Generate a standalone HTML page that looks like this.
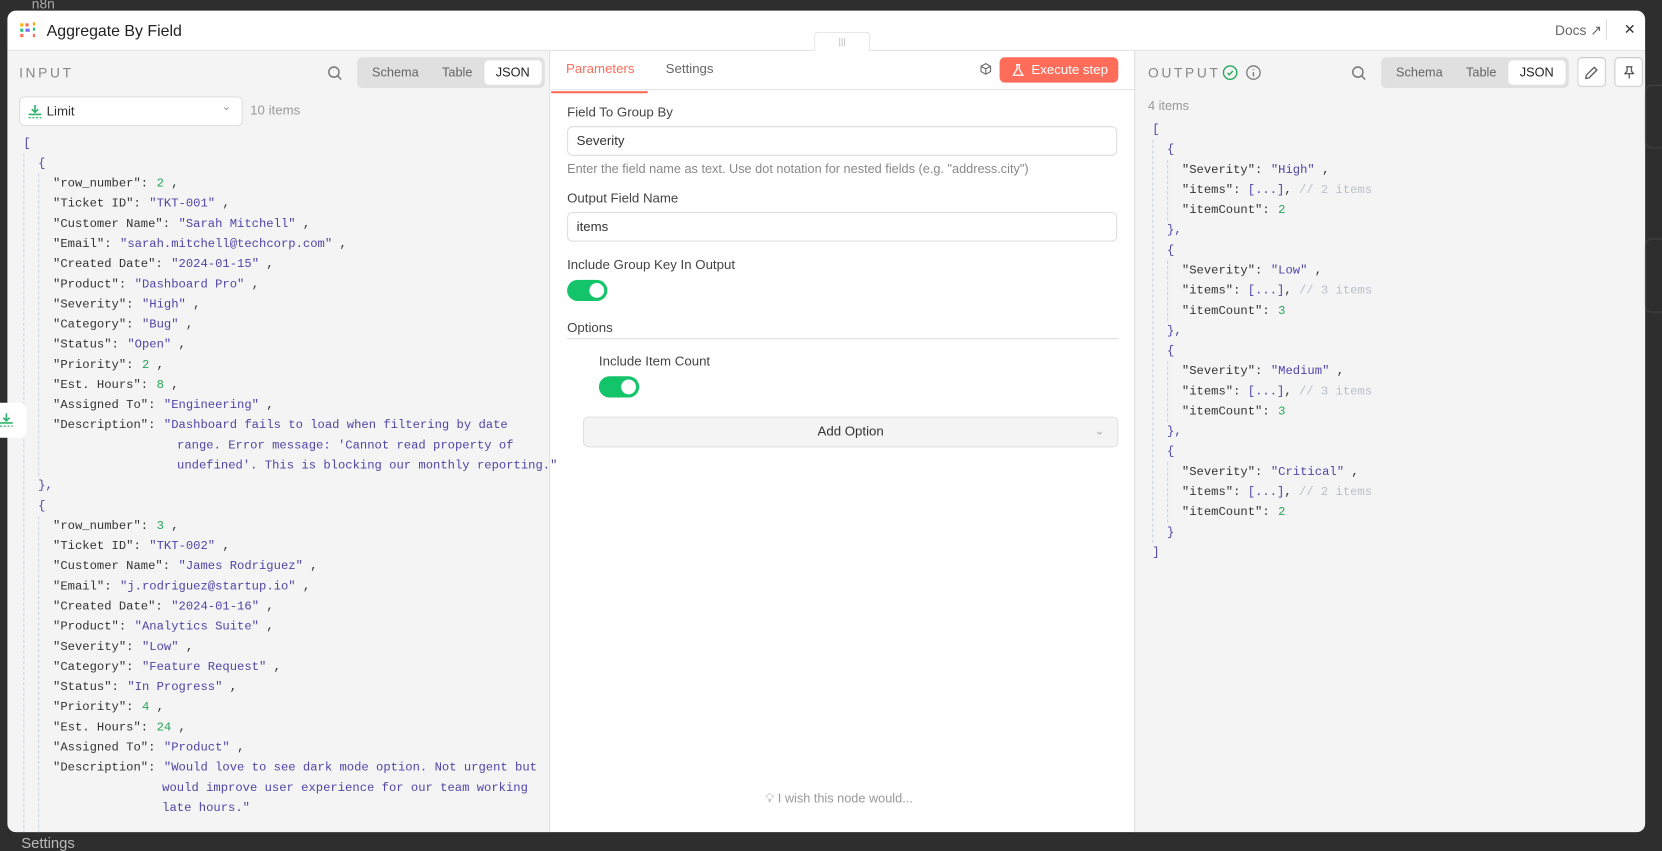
<!DOCTYPE html>
<html><head><meta charset="utf-8"><style>
*{box-sizing:border-box;margin:0;padding:0}
html,body{width:1662px;height:837px;overflow:hidden;background:#2e2e2e}
#w{position:absolute;left:0;top:0;width:1568px;height:790px;transform:scale(1.06);transform-origin:0 0;font-family:"Liberation Sans",sans-serif;color:#333}
.abs{position:absolute}
.modal{position:absolute;left:7px;top:10px;width:1545px;height:775px;background:#fff;border-radius:8px;overflow:hidden}
.mono{font-family:"Liberation Mono",monospace;font-size:11.5px;color:#333}
.ln{height:19px;line-height:19px;white-space:pre}
.ch{border-left:1px dashed #c9d3e2;padding-left:13px}
.s{color:#4f45a6}.n{color:#27a55a}.c{color:#b8c0cc}.p{color:#4f45a6}
.v{margin-left:8px}
.tabs{position:absolute;background:#e0e0e0;border-radius:5px;display:flex;padding:3px;font-size:12px;color:#666}
.tabs div{padding:0 11px;line-height:23px}
.tabs .on{background:#fff;color:#222;border-radius:4px}
.lbl{font-size:12.5px;color:#444}
.inp{position:absolute;left:535px;width:519px;height:28px;border:1px solid #ddd;border-radius:5px;font-size:12.5px;padding-left:8px;line-height:26px;color:#333}
.tog{position:absolute;width:38px;height:20px;background:#13c46a;border-radius:10px}
.tog:after{content:"";position:absolute;right:3px;top:3px;width:14px;height:14px;border-radius:50%;background:#fff}
</style></head><body><div id="w">
<div class="abs" style="left:30px;top:-4px;color:#aaa;font-size:13px">n8n</div>
<div class="abs" style="left:1552px;top:80px;width:110px;height:60px;border:1px solid #444;border-radius:6px"></div>
<div class="abs" style="left:1552px;top:225px;width:110px;height:70px;border:1px solid #444;border-radius:6px"></div>
<div class="abs" style="left:20px;top:787px;color:#bbb;font-size:14px">Settings</div>

<div class="modal">
 <div class="abs" style="left:0;top:0;width:1545px;height:38px;border-bottom:1px solid #e4e4e4"></div>
 <svg class="abs" style="left:12px;top:11px" width="16" height="16" viewBox="0 0 16 16"><rect x="0" y="1" width="3" height="3" fill="#f5b800"/><rect x="0" y="6" width="3" height="3" fill="#29c37a"/><rect x="0" y="11" width="3" height="3" fill="#ff6d5a"/><rect x="5" y="1" width="3" height="3" fill="#ff6d5a"/><rect x="5" y="6" width="4" height="3" fill="#7b6dfa"/><rect x="12" y="0" width="2" height="3" fill="#ffa200"/><rect x="12" y="5" width="2" height="3" fill="#29c37a"/><rect x="12" y="11" width="2" height="3" fill="#ff6d5a"/></svg>
 <div class="abs" style="left:37px;top:11px;font-size:15px;color:#222">Aggregate By Field</div>
 <div class="abs" style="left:1460px;top:11px;font-size:13px;color:#666">Docs ↗</div>
 <div class="abs" style="left:1508px;top:8px;width:1px;height:20px;background:#ddd"></div>
 <div class="abs" style="left:1525px;top:10px;font-size:13px;color:#333">✕</div>
 <div class="abs" style="left:761px;top:20px;width:53px;height:18px;background:#fff;border:1px solid #e4e4e4;border-bottom:none;border-radius:4px 4px 0 0;text-align:center;color:#bbb;font-size:9px;line-height:16px">|||</div>

 <div class="abs" style="left:0;top:38px;width:512px;height:737px;background:#f4f4f4;border-right:1px solid #e0e0e0">
  <div class="abs" style="left:11px;top:13px;font-size:13px;letter-spacing:2.5px;color:#888">INPUT</div>
  <svg class="abs" style="left:302px;top:14px" width="14" height="14" viewBox="0 0 14 14"><circle cx="6" cy="6" r="4.8" fill="none" stroke="#777" stroke-width="1.4"/><path d="M9.5 9.5L13 13" stroke="#777" stroke-width="1.4"/></svg>
  <div class="tabs" style="left:330px;top:6px;height:29px"><div>Schema</div><div>Table</div><div class="on">JSON</div></div>
  <div class="abs" style="left:11px;top:43px;width:211px;height:28px;background:#fff;border:1px solid #ddd;border-radius:5px">
   <svg class="abs" style="left:7px;top:6px" width="14" height="14" viewBox="0 0 14 14"><path d="M7 1v7M4 5l3 3 3-3M1 10h12" stroke="#2fb36a" stroke-width="1.5" fill="none"/><path d="M1 13h12" stroke="#2fb36a" stroke-width="1.2" stroke-dasharray="2 1.5"/></svg>
   <div class="abs" style="left:25px;top:6px;font-size:12.5px;color:#333">Limit</div>
   <div class="abs" style="left:190px;top:2px;font-size:11px;color:#999">⌄</div>
  </div>
  <div class="abs" style="left:229px;top:49px;font-size:12.5px;color:#999">10 items</div>
  <div class="abs mono" style="left:15px;top:78px">
   <div class="ln p">[</div>
   <div class="ch">
    <div class="ln p">{</div>
    <div class="ch">
     <div class="ln">"row_number":<span class="v n">2</span> ,</div>
     <div class="ln">"Ticket ID":<span class="v s">"TKT-001"</span> ,</div>
     <div class="ln">"Customer Name":<span class="v s">"Sarah Mitchell"</span> ,</div>
     <div class="ln">"Email":<span class="v s">"sarah.mitchell@techcorp.com"</span> ,</div>
     <div class="ln">"Created Date":<span class="v s">"2024-01-15"</span> ,</div>
     <div class="ln">"Product":<span class="v s">"Dashboard Pro"</span> ,</div>
     <div class="ln">"Severity":<span class="v s">"High"</span> ,</div>
     <div class="ln">"Category":<span class="v s">"Bug"</span> ,</div>
     <div class="ln">"Status":<span class="v s">"Open"</span> ,</div>
     <div class="ln">"Priority":<span class="v n">2</span> ,</div>
     <div class="ln">"Est. Hours":<span class="v n">8</span> ,</div>
     <div class="ln">"Assigned To":<span class="v s">"Engineering"</span> ,</div>
     <div class="ln">"Description":<span class="v s">"Dashboard fails to load when filtering by date</span></div>
     <div class="ln s" style="padding-left:117px">range. Error message: 'Cannot read property of</div>
     <div class="ln s" style="padding-left:117px">undefined'. This is blocking our monthly reporting."</div>
    </div>
    <div class="ln p">},</div>
    <div class="ln p">{</div>
    <div class="ch">
     <div class="ln">"row_number":<span class="v n">3</span> ,</div>
     <div class="ln">"Ticket ID":<span class="v s">"TKT-002"</span> ,</div>
     <div class="ln">"Customer Name":<span class="v s">"James Rodriguez"</span> ,</div>
     <div class="ln">"Email":<span class="v s">"j.rodriguez@startup.io"</span> ,</div>
     <div class="ln">"Created Date":<span class="v s">"2024-01-16"</span> ,</div>
     <div class="ln">"Product":<span class="v s">"Analytics Suite"</span> ,</div>
     <div class="ln">"Severity":<span class="v s">"Low"</span> ,</div>
     <div class="ln">"Category":<span class="v s">"Feature Request"</span> ,</div>
     <div class="ln">"Status":<span class="v s">"In Progress"</span> ,</div>
     <div class="ln">"Priority":<span class="v n">4</span> ,</div>
     <div class="ln">"Est. Hours":<span class="v n">24</span> ,</div>
     <div class="ln">"Assigned To":<span class="v s">"Product"</span> ,</div>
     <div class="ln">"Description":<span class="v s">"Would love to see dark mode option. Not urgent but</span></div>
     <div class="ln s" style="padding-left:103px">would improve user experience for our team working</div>
     <div class="ln s" style="padding-left:103px">late hours."</div>
     <div class="ln"> </div>
    </div>
   </div>
  </div>
 </div>

 <div class="abs" style="left:513px;top:38px;width:550px;height:37px;border-bottom:1px solid #e4e4e4"></div>
 <div class="abs" style="left:527px;top:48px;font-size:12.5px;color:#ff6d5a">Parameters</div>
 <div class="abs" style="left:513px;top:76px;width:91px;height:2px;background:#ff6d5a"></div>
 <div class="abs" style="left:621px;top:48px;font-size:12.5px;color:#666">Settings</div>
 <svg class="abs" style="left:917px;top:49px" width="12" height="12" viewBox="0 0 12 12"><path d="M6 1l4.5 2.5v5L6 11 1.5 8.5v-5zM1.5 3.5L6 6l4.5-2.5M6 6v5" fill="none" stroke="#666" stroke-width="1"/></svg>
 <div class="abs" style="left:936px;top:44px;width:112px;height:24px;background:#ff6d5a;border-radius:5px;color:#fff;font-size:12.5px;line-height:24px;padding-left:30px">Execute step</div>
 <svg class="abs" style="left:948px;top:50px" width="11" height="12" viewBox="0 0 11 12"><path d="M3.5 1h4M4.5 1v4L1 11h9L6.5 5V1" fill="none" stroke="#fff" stroke-width="1.2"/></svg>
 <div class="abs lbl" style="left:528px;top:89px">Field To Group By</div>
 <div class="inp" style="left:528px;top:109px">Severity</div>
 <div class="abs" style="left:528px;top:142px;font-size:12px;color:#888">Enter the field name as text. Use dot notation for nested fields (e.g. "address.city")</div>
 <div class="abs lbl" style="left:528px;top:170px">Output Field Name</div>
 <div class="inp" style="left:528px;top:190px">items</div>
 <div class="abs lbl" style="left:528px;top:233px">Include Group Key In Output</div>
 <div class="tog" style="left:528px;top:254px"></div>
 <div class="abs lbl" style="left:528px;top:292px">Options</div>
 <div class="abs" style="left:528px;top:309px;width:520px;height:1px;background:#ddd"></div>
 <div class="abs lbl" style="left:558px;top:324px">Include Item Count</div>
 <div class="tog" style="left:558px;top:345px"></div>
 <div class="abs" style="left:543px;top:383px;width:505px;height:29px;background:#f4f4f4;border:1px solid #e0e0e0;border-radius:5px;text-align:center;font-size:12.5px;line-height:27px;color:#333">Add Option<span style="position:absolute;right:12px;color:#aaa;font-size:11px">⌄</span></div>
 <div class="abs" style="left:715px;top:736px;font-size:12px;color:#999">💡︎ I wish this node would...</div>

 <div class="abs" style="left:1063px;top:38px;width:482px;height:737px;background:#f4f4f4;border-left:1px solid #e0e0e0">
  <div class="abs" style="left:12px;top:13px;font-size:13px;letter-spacing:2.5px;color:#888">OUTPUT</div>
  <svg class="abs" style="left:82px;top:13px" width="15" height="15" viewBox="0 0 15 15"><circle cx="7.5" cy="7.5" r="6.3" fill="none" stroke="#2aa65c" stroke-width="1.3"/><path d="M5 7.7l1.8 1.8L10 6" fill="none" stroke="#2aa65c" stroke-width="1.3"/></svg>
  <svg class="abs" style="left:104px;top:13px" width="15" height="15" viewBox="0 0 15 15"><circle cx="7.5" cy="7.5" r="6.3" fill="none" stroke="#777" stroke-width="1.2"/><path d="M7.5 7v4M7.5 4.3v.8" stroke="#777" stroke-width="1.3"/></svg>
  <svg class="abs" style="left:204px;top:14px" width="14" height="14" viewBox="0 0 14 14"><circle cx="6" cy="6" r="4.8" fill="none" stroke="#777" stroke-width="1.4"/><path d="M9.5 9.5L13 13" stroke="#777" stroke-width="1.4"/></svg>
  <div class="tabs" style="left:232px;top:6px;height:29px"><div>Schema</div><div>Table</div><div class="on">JSON</div></div>
  <div class="abs" style="left:417px;top:6px;width:27px;height:28px;border:1px solid #ccc;border-radius:4px;background:#fff"><svg style="position:absolute;left:6px;top:7px" width="13" height="13" viewBox="0 0 13 13"><path d="M9 1.5l2.5 2.5L4 11.5 1 12l.5-3z" fill="none" stroke="#444" stroke-width="1.1"/></svg></div>
  <div class="abs" style="left:452px;top:6px;width:27px;height:28px;border:1px solid #ccc;border-radius:4px;background:#fff"><svg style="position:absolute;left:7px;top:7px" width="12" height="13" viewBox="0 0 12 13"><path d="M3 1h6M4 1v4L2 7.5h8L8 5V1M6 7.5V12" fill="none" stroke="#444" stroke-width="1.1"/></svg></div>
  <div class="abs" style="left:12px;top:45px;font-size:12px;color:#999">4 items</div>
  <div class="abs mono" style="left:16px;top:65px">
   <div class="ln p">[</div>
   <div class="ch">
    <div class="ln p">{</div>
    <div class="ch"><div class="ln">"Severity":<span class="v s">"High"</span> ,</div><div class="ln">"items": <span class="p">[...]</span>, <span class="c">// 2 items</span></div><div class="ln">"itemCount":<span class="v n">2</span></div></div>
    <div class="ln p">},</div>
    <div class="ln p">{</div>
    <div class="ch"><div class="ln">"Severity":<span class="v s">"Low"</span> ,</div><div class="ln">"items": <span class="p">[...]</span>, <span class="c">// 3 items</span></div><div class="ln">"itemCount":<span class="v n">3</span></div></div>
    <div class="ln p">},</div>
    <div class="ln p">{</div>
    <div class="ch"><div class="ln">"Severity":<span class="v s">"Medium"</span> ,</div><div class="ln">"items": <span class="p">[...]</span>, <span class="c">// 3 items</span></div><div class="ln">"itemCount":<span class="v n">3</span></div></div>
    <div class="ln p">},</div>
    <div class="ln p">{</div>
    <div class="ch"><div class="ln">"Severity":<span class="v s">"Critical"</span> ,</div><div class="ln">"items": <span class="p">[...]</span>, <span class="c">// 2 items</span></div><div class="ln">"itemCount":<span class="v n">2</span></div></div>
    <div class="ln p">}</div>
   </div>
   <div class="ln p">]</div>
  </div>
 </div>
</div>
<div class="abs" style="left:0;top:380px;width:25px;height:33px;background:#fff;border-radius:0 6px 6px 0">
 <svg style="position:absolute;left:0;top:9px" width="16" height="16" viewBox="0 0 16 16"><path d="M6 1v7M3 5l3 3 3-3M0 10h12" stroke="#2fb36a" stroke-width="1.5" fill="none"/><path d="M0 13h12" stroke="#2fb36a" stroke-width="1.2" stroke-dasharray="2 1.5"/></svg>
</div>
</div></body></html>
